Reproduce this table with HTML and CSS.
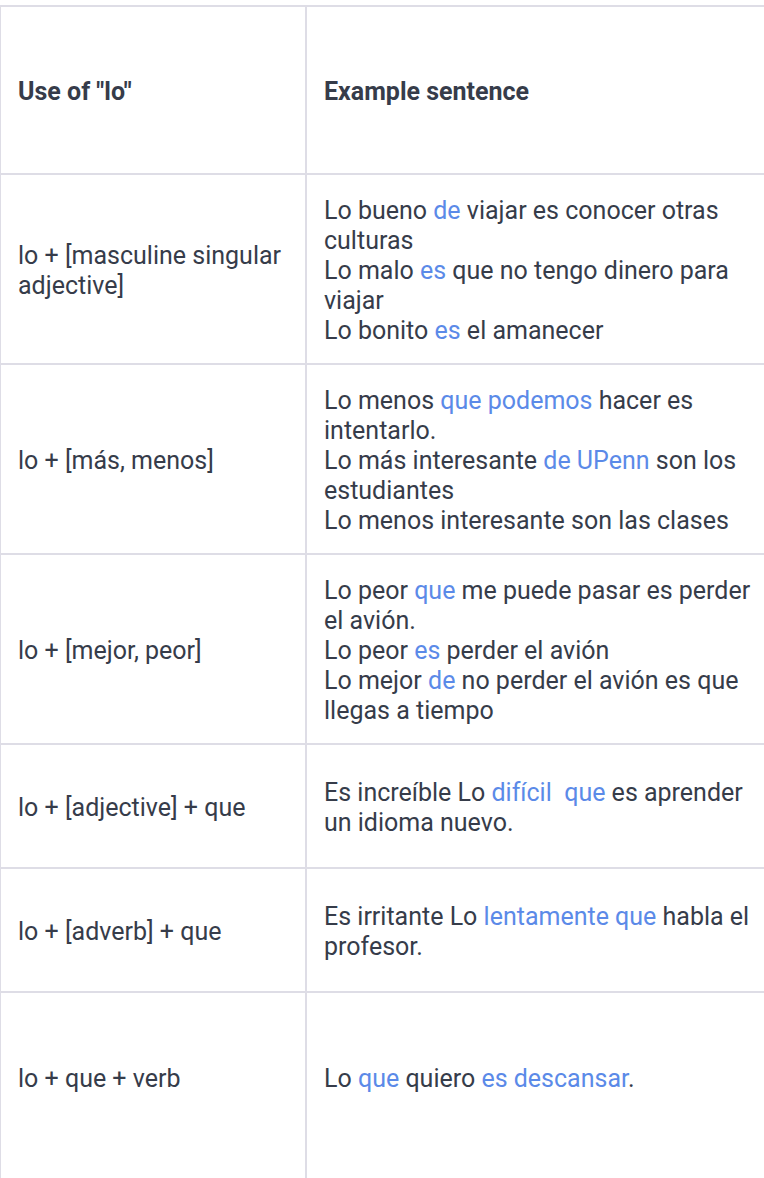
FILE: index.html
```html
<!DOCTYPE html>
<html>
<head>
<meta charset="utf-8">
<link rel="stylesheet" href="styles.css">
</head>
<body>
<table class="lo-table">
  <tr class="row-head">
    <th class="col-use">Use of "lo"</th>
    <th class="col-ex">Example sentence</th>
  </tr>
  <tr>
    <td class="col-use">lo + [masculine singular adjective]</td>
    <td class="col-ex">Lo bueno <span class="hl">de</span> viajar es conocer otras culturas<br>Lo malo <span class="hl">es</span> que no tengo dinero para viajar<br>Lo bonito <span class="hl">es</span> el amanecer</td>
  </tr>
  <tr>
    <td class="col-use">lo + [más, menos]</td>
    <td class="col-ex">Lo menos <span class="hl">que podemos</span> hacer es intentarlo.<br>Lo más interesante <span class="hl">de UPenn</span> son los estudiantes<br>Lo menos interesante son las clases</td>
  </tr>
  <tr>
    <td class="col-use">lo + [mejor, peor]</td>
    <td class="col-ex">Lo peor <span class="hl">que</span> me puede pasar es perder el avión.<br>Lo peor <span class="hl">es</span> perder el avión<br>Lo mejor <span class="hl">de</span> no perder el avión es que llegas a tiempo</td>
  </tr>
  <tr class="row-short">
    <td class="col-use">lo + [adjective] + que</td>
    <td class="col-ex">Es increíble Lo <span class="hl">difícil&nbsp; que</span> es aprender un idioma nuevo.</td>
  </tr>
  <tr class="row-short">
    <td class="col-use">lo + [adverb] + que</td>
    <td class="col-ex">Es irritante Lo <span class="hl">lentamente que</span> habla el profesor.</td>
  </tr>
  <tr class="row-last">
    <td class="col-use">lo + que + verb</td>
    <td class="col-ex">Lo <span class="hl">que</span> quiero <span class="hl">es descansar</span>.</td>
  </tr>
</table>
</body>
</html>
```

FILE: styles.css
```css
html, body {
  margin: 0;
  padding: 0;
  background: #ffffff;
  overflow: hidden;
}

body {
  font-family: Roboto, "Liberation Sans", Arial, sans-serif;
  color: #363c4a;
  font-size: 25px;
  line-height: 30px;
}

.lo-table {
  border-collapse: collapse;
  margin-top: 5px;
  margin-left: -1px;
  width: 786px;
  table-layout: fixed;
}

.lo-table th,
.lo-table td {
  border: 2px solid #dedde6;
  padding: 21px 17px 17px 17px;
  vertical-align: middle;
  text-align: left;
}

.lo-table th {
  font-weight: 700;
}

.col-use {
  width: 270px;
}

.row-head th {
  height: 128px;
}

.row-short td {
  height: 84px;
}

.row-last td {
  height: 200px;
  padding-top: 71px;
  vertical-align: top;
}

.hl {
  color: #5b8ae8;
}
```
